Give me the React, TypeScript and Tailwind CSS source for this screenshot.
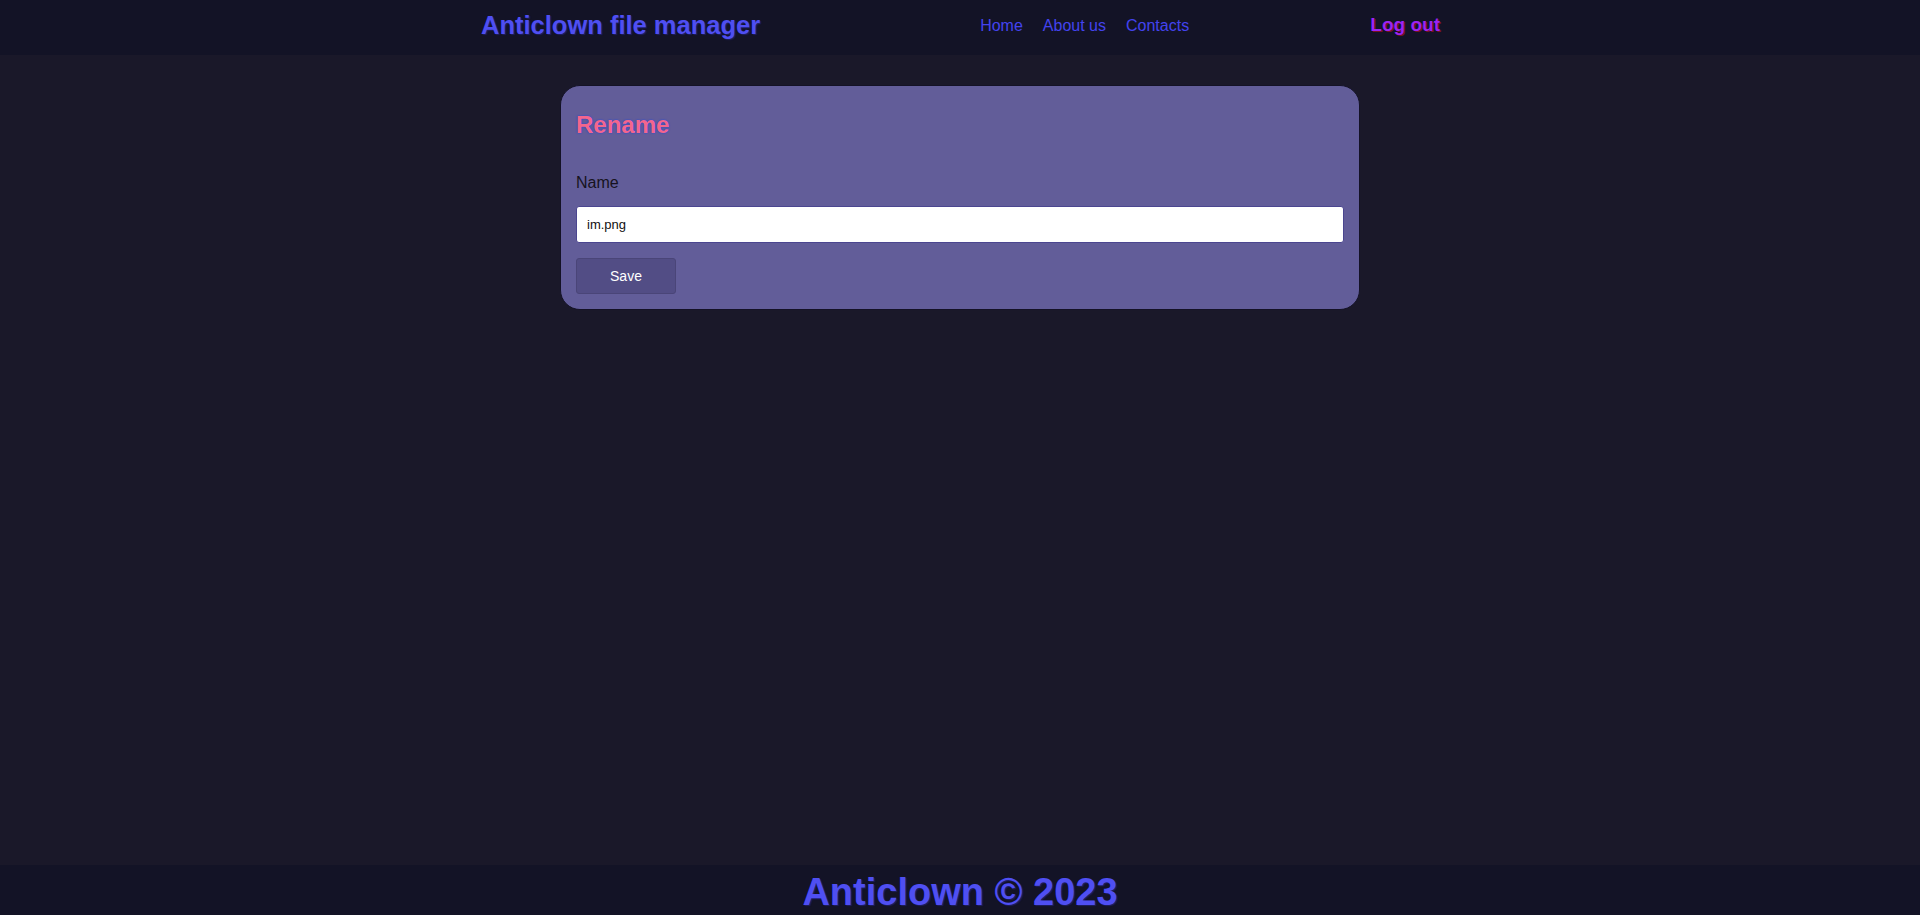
import React from "react";

const App = () => {
  return (
    <div className="min-h-screen flex flex-col bg-[#1a1829] font-['Liberation_Sans',Arial,sans-serif]">
      <header className="h-[55px] bg-[#131326]">
        <div className="w-[960px] h-full mx-auto flex items-center pb-1">
          <a className="text-[25.5px] font-bold text-[#4f4ff2] [text-shadow:1px_1px_1px_#1e1e60] leading-none pl-px">
            Anticlown file manager
          </a>
          <nav className="flex gap-5 ml-[220px] text-base text-[#4343ee]">
            <a>Home</a>
            <a>About us</a>
            <a>Contacts</a>
          </nav>
          <a className="ml-auto text-[19px] font-bold text-[#9b24f4] [text-shadow:1px_1px_0_#7a1020]">
            Log out
          </a>
        </div>
      </header>

      <main className="flex-1 pt-[30px]">
        <div className="w-[800px] mx-auto bg-[#625d99] border border-[#141226] rounded-[20px] px-[15px] pt-[25px] pb-[15px]">
          <h2 className="text-[24px] font-bold text-[#f3668c] [text-shadow:0_0_2px_#2a49d8,0_0_1px_#2a49d8] leading-[28px]">
            Rename
          </h2>
          <label className="block mt-[35px] text-base text-[#161320] leading-[18px]">
            Name
          </label>
          <input
            className="mt-[14px] block w-full h-[37px] bg-white border border-[#4b4690] rounded-[3px] px-[10px] text-[13px] text-[#111] outline-none"
            defaultValue="im.png"
          />
          <button className="mt-[15px] w-[100px] h-[36px] bg-[#524d85] border border-[#4a4578] rounded-[3px] text-white text-[14px]">
            Save
          </button>
        </div>
      </main>

      <footer className="h-[50px] bg-[#131326] flex items-center justify-center pt-[3px]">
        <span className="text-[38px] font-bold text-[#4f4ff2] [text-shadow:1px_1px_1px_#1e1e60] leading-none">
          Anticlown © 2023
        </span>
      </footer>
    </div>
  );
};

export default App;
